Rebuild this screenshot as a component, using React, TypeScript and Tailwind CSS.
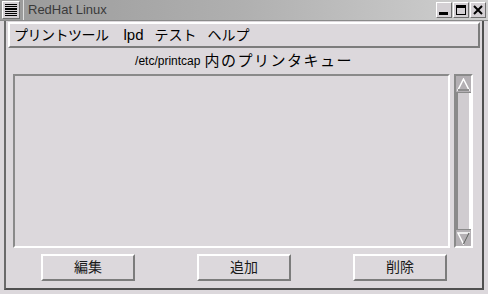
const font = {
  fontFamily: '"Liberation Sans", "Noto Sans CJK JP", sans-serif',
};

function TitleButton({ kind }: { kind: "min" | "max" | "close" }) {
  return (
    <div className="flex h-[16px] w-[16px] items-center justify-center border border-t-white border-l-white border-r-[#6e6e6e] border-b-[#6e6e6e] bg-[#d4d0d4]">
      <svg width="12" height="12" viewBox="0 0 12 12">
        {kind === "min" && <rect x="1" y="8" width="9" height="3" fill="#000" />}
        {kind === "max" && (
          <>
            <rect x="1.5" y="1.5" width="9" height="9" fill="none" stroke="#000" />
            <rect x="1" y="1" width="10" height="3" fill="#000" />
          </>
        )}
        {kind === "close" && (
          <path d="M2 2 L10 10 M10 2 L2 10" stroke="#000" strokeWidth="2" />
        )}
      </svg>
    </div>
  );
}

function PushButton({ label }: { label: string }) {
  return (
    <button
      type="button"
      className="flex h-[27px] w-[94px] items-center justify-center border-2 border-t-white border-l-white border-r-[#7c7c7c] border-b-[#7c7c7c] bg-[#dcd8dc] text-[14px] text-[#1a1a1a]"
    >
      {label}
    </button>
  );
}

export default function App() {
  return (
    <div
      className="flex h-[294px] w-[488px] flex-col overflow-hidden bg-[#dcd8dc] text-black"
      style={font}
    >
      <div className="flex h-[21px] items-center bg-gradient-to-r from-[#9a9a9a] via-[#b0b0b0] to-[#d0d0d0] border-b border-[#8a8a8a]">
        <div className="ml-[2px] flex h-[18px] w-[18px] flex-col justify-between border border-t-white border-l-white border-r-[#6e6e6e] border-b-[#6e6e6e] bg-[#d4d0d4] px-[2px] py-[2px]">
          {Array.from({ length: 7 }).map((_, i) => (
            <div key={i} className="h-[1px] bg-black" />
          ))}
        </div>
        <div className="ml-[3px] h-full w-[1px] bg-[#e0e0e0]" />
        <span className="ml-[4px] text-[13px] text-[#3a3a3a]">RedHat Linux</span>
        <div className="ml-auto mr-[2px] flex gap-[1px]">
          <TitleButton kind="min" />
          <TitleButton kind="max" />
          <TitleButton kind="close" />
        </div>
      </div>

      <div className="flex flex-1 px-[4px] pb-[4px]">
        <div className="flex flex-1 flex-col border-l-2 border-r-2 border-b-2 border-l-[#6a6a6a] border-r-[#505050] border-b-[#505050] px-[2px] pb-[2px]">
          <div className="mt-[1px] flex h-[26px] items-center border-2 border-t-white border-l-white border-r-[#7c7c7c] border-b-[#7c7c7c] pl-[4px] text-[14px]">
            <span className="tracking-[-0.5px]">プリントツール</span>
            <span className="ml-[15px] text-[15px]">lpd</span>
            <span className="ml-[11px]">テスト</span>
            <span className="ml-[11px]">ヘルプ</span>
          </div>

          <div className="flex h-[26px] items-center justify-center">
            <span className="text-[12px]">/etc/printcap</span>
            <span className="ml-[4px] text-[15px] tracking-[1.5px]">内のプリンタキュー</span>
          </div>

          <div className="flex h-[174px] pl-[5px] pr-[7px]">
            <div className="flex-1 border-2 border-t-[#8a8a8a] border-l-[#8a8a8a] border-r-white border-b-white bg-[#dcd8dc]" />
            <div className="ml-[4px] flex w-[19px] flex-col border-2 border-t-[#8a8a8a] border-l-[#8a8a8a] border-r-white border-b-white bg-[#d0ccd0]">
              <div className="flex h-[17px] items-center justify-center border-b border-[#8a8a8a] bg-[#b4b0b4]">
                <svg width="13" height="13" viewBox="0 0 13 13">
                  <path d="M6.5 1 L12 12 L1 12 Z" fill="#b4b0b4" stroke="#fff" strokeWidth="1.5" />
                  <path d="M1 12 L12 12" stroke="#6e6e6e" strokeWidth="1.5" />
                </svg>
              </div>
              <div className="flex-1 border-l-2 border-r-2 border-l-[#8a8a8a] border-r-white" />
              <div className="flex h-[17px] items-center justify-center border-t border-[#8a8a8a] bg-[#b4b0b4]">
                <svg width="13" height="13" viewBox="0 0 13 13">
                  <path d="M1 1 L12 1 L6.5 12 Z" fill="#b4b0b4" stroke="#fff" strokeWidth="1.5" />
                  <path d="M12 1 L6.5 12" stroke="#6e6e6e" strokeWidth="1.5" />
                </svg>
              </div>
            </div>
          </div>

          <div className="flex flex-1 items-center gap-[62px] pl-[33px]">
            <PushButton label="編集" />
            <PushButton label="追加" />
            <PushButton label="削除" />
          </div>
        </div>
      </div>
    </div>
  );
}
